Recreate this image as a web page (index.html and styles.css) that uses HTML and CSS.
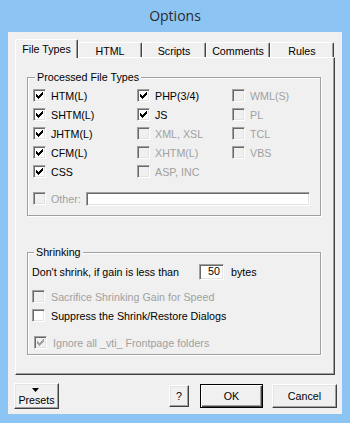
FILE: index.html
```html
<!DOCTYPE html>
<html>

<head>
    <meta charset="UTF-8">
    <title>Options</title>
    <link rel="stylesheet" href="styles.css">
</head>

<body>
    <div class="frame">
        <div class="title">Options</div>
        <div class="client">
            <div class="tabs">
                <div class="tab active">File Types</div>
                <div class="tab">HTML</div>
                <div class="tab">Scripts</div>
                <div class="tab">Comments</div>
                <div class="tab">Rules</div>
            </div>
            <div class="panel">
                <fieldset class="group types">
                    <legend>Processed File Types</legend>
                    <div class="grid">
                        <label class="item"><span class="cb"><svg viewBox="1 1 11 11"><path d="M3 5h1v1h1v1h1v-1h1v-1h1v-1h1v-1h1v3h-1v1h-1v1h-1v1h-1v1h-1v-1h-1v-1h-1z"/></svg></span>HTM(L)</label>
                        <label class="item"><span class="cb"><svg viewBox="1 1 11 11"><path d="M3 5h1v1h1v1h1v-1h1v-1h1v-1h1v-1h1v3h-1v1h-1v1h-1v1h-1v1h-1v-1h-1v-1h-1z"/></svg></span>PHP(3/4)</label>
                        <label class="item off"><span class="cb"></span>WML(S)</label>

                        <label class="item"><span class="cb"><svg viewBox="1 1 11 11"><path d="M3 5h1v1h1v1h1v-1h1v-1h1v-1h1v-1h1v3h-1v1h-1v1h-1v1h-1v1h-1v-1h-1v-1h-1z"/></svg></span>SHTM(L)</label>
                        <label class="item"><span class="cb"><svg viewBox="1 1 11 11"><path d="M3 5h1v1h1v1h1v-1h1v-1h1v-1h1v-1h1v3h-1v1h-1v1h-1v1h-1v1h-1v-1h-1v-1h-1z"/></svg></span>JS</label>
                        <label class="item off"><span class="cb"></span>PL</label>

                        <label class="item"><span class="cb"><svg viewBox="1 1 11 11"><path d="M3 5h1v1h1v1h1v-1h1v-1h1v-1h1v-1h1v3h-1v1h-1v1h-1v1h-1v1h-1v-1h-1v-1h-1z"/></svg></span>JHTM(L)</label>
                        <label class="item off"><span class="cb"></span>XML, XSL</label>
                        <label class="item off"><span class="cb"></span>TCL</label>

                        <label class="item"><span class="cb"><svg viewBox="1 1 11 11"><path d="M3 5h1v1h1v1h1v-1h1v-1h1v-1h1v-1h1v3h-1v1h-1v1h-1v1h-1v1h-1v-1h-1v-1h-1z"/></svg></span>CFM(L)</label>
                        <label class="item off"><span class="cb"></span>XHTM(L)</label>
                        <label class="item off"><span class="cb"></span>VBS</label>

                        <label class="item"><span class="cb"><svg viewBox="1 1 11 11"><path d="M3 5h1v1h1v1h1v-1h1v-1h1v-1h1v-1h1v3h-1v1h-1v1h-1v1h-1v1h-1v-1h-1v-1h-1z"/></svg></span>CSS</label>
                        <label class="item off"><span class="cb"></span>ASP, INC</label>
                    </div>
                    <div class="item off other">
                        <span class="cb"></span>Other:
                        <span class="field wide"></span>
                    </div>
                </fieldset>

                <fieldset class="group shrink">
                    <legend>Shrinking</legend>
                    <div class="gain">
                        <span class="gain-text">Don't shrink, if gain is less than</span>
                        <span class="field num">50</span>
                        <span class="unit">bytes</span>
                    </div>
                    <label class="item off sacrifice"><span class="cb"></span>Sacrifice Shrinking Gain for Speed</label>
                    <label class="item"><span class="cb"></span>Suppress the Shrink/Restore Dialogs</label>
                    <label class="item off ignore"><span class="cb"><svg viewBox="1 1 11 11"><path d="M3 5h1v1h1v1h1v-1h1v-1h1v-1h1v-1h1v3h-1v1h-1v1h-1v1h-1v1h-1v-1h-1v-1h-1z"/></svg></span>Ignore all _vti_ Frontpage folders</label>
                </fieldset>
            </div>

            <div class="buttons">
                <div class="btn presets">
                    <svg class="arrow" viewBox="0 0 7 4"><path d="M0 0h7l-3.5 4z"/></svg>
                    <span>Presets</span>
                </div>
                <div class="btn help">?</div>
                <div class="btn ok">OK</div>
                <div class="btn cancel">Cancel</div>
            </div>
        </div>
    </div>
</body>

</html>
```

FILE: styles.css
```css
body {
    margin: 0;
    background-color: #8cc4f4;
    font-family: "Liberation Sans", Arial, sans-serif;
    font-size: 10.7px;
    color: #000;
}

.frame {
    width: 350px;
    height: 423px;
}

.title {
    height: 32px;
    display: flex;
    align-items: center;
    justify-content: center;
    padding-bottom: 1px;
    box-sizing: border-box;
    font-family: "Open Sans", sans-serif;
    font-size: 14px;
    color: #2b2b2b;
}

.client {
    width: 334px;
    height: 382px;
    margin-left: 8px;
    padding: 7px 0 0 7px;
    box-sizing: border-box;
    background-color: #f0f0f0;
}

/* tabs */

.tabs {
    display: flex;
    align-items: flex-end;
    height: 18px;
}

.tab {
    width: 64px;
    height: 15px;
    box-sizing: border-box;
    padding-top: 2px;
    line-height: 12px;
    text-align: center;
    border-top: 1px solid #fff;
    border-left: 1px solid #fff;
    border-right: 1px solid #404040;
    box-shadow: inset -1px 0 #a0a0a0;
    border-radius: 2px 2px 0 0;
}

.tab.active {
    width: 63px;
    height: 19px;
    margin-bottom: -1px;
    padding-top: 3px;
    position: relative;
    z-index: 1;
    background-color: #f0f0f0;
}

.panel {
    width: 320px;
    height: 318px;
    box-sizing: border-box;
    padding: 13px 0 0 11px;
    border-top: 1px solid #fff;
    border-left: 1px solid #fff;
    border-right: 1px solid #404040;
    border-bottom: 1px solid #404040;
    box-shadow: inset -1px -1px #a0a0a0;
}

/* group boxes */

.group {
    width: 294px;
    min-width: 0;
    margin: 0;
    box-sizing: border-box;
    border: 1px solid #a0a0a0;
    box-shadow: inset 1px 1px #fff, 1px 1px #fff;
}

.group legend {
    padding: 0 2px;
    margin-left: 2px;
    line-height: 13px;
    background-color: #f0f0f0;
}

.types {
    padding: 2px 0 7px 5px;
}

.shrink {
    margin-top: 30px;
    padding: 5px 0 2px 4px;
}

.grid {
    display: grid;
    grid-template-columns: 104px 95px 1fr;
    grid-auto-rows: 19px;
}

.item {
    display: flex;
    align-items: center;
    gap: 5px;
    height: 19px;
}

.item.off {
    color: #a0a0a0;
}

.other {
    margin-top: 8px;
}

.sacrifice {
    margin-top: 7px;
}

.shrink .item {
    gap: 6px;
}

.ignore {
    margin-top: 8px;
    margin-left: 2px;
}

/* checkbox */

.cb {
    flex: none;
    width: 13px;
    height: 13px;
    box-sizing: border-box;
    border: 1px solid;
    border-color: #a0a0a0 #fff #fff #a0a0a0;
    box-shadow: inset 1px 1px #696969, inset -1px -1px #e3e3e3;
    background-color: #fff;
}

.cb svg {
    display: block;
    width: 11px;
    height: 11px;
    shape-rendering: crispEdges;
}

.off .cb {
    background-color: #f0f0f0;
}

.off .cb path {
    fill: #a0a0a0;
}

/* edit boxes */

.field {
    display: block;
    box-sizing: border-box;
    border: 1px solid;
    border-color: #a0a0a0 #fff #fff #a0a0a0;
    box-shadow: inset 1px 1px #696969, inset -1px -1px #e3e3e3;
    background-color: #fff;
    color: #000;
}

.field.wide {
    width: 224px;
    height: 14px;
    margin-left: auto;
    margin-right: 10px;
}

.gain {
    display: flex;
    align-items: center;
    height: 16px;
}

.gain-text {
    width: 167px;
}

.field.num {
    width: 25px;
    height: 16px;
    line-height: 13px;
    padding-right: 3px;
    text-align: right;
}

.unit {
    margin-left: 7px;
}

/* buttons */

.buttons {
    display: flex;
    align-items: center;
    height: 26px;
    margin: 8px 5px 0 -1px;
}

.btn {
    display: flex;
    align-items: center;
    justify-content: center;
    box-sizing: border-box;
    border: 1px solid;
    border-color: #fff #404040 #404040 #fff;
    box-shadow: inset -1px -1px #a0a0a0, inset 1px 1px #e3e3e3;
    background-color: #f0f0f0;
}

.presets {
    width: 45px;
    height: 26px;
    flex-direction: column;
    gap: 2px;
    padding-top: 1px;
}

.arrow {
    display: block;
    width: 7px;
    height: 4px;
    margin-right: 3px;
}

.help {
    width: 20px;
    height: 22px;
    margin-left: auto;
}

.ok {
    width: 63px;
    height: 24px;
    margin-left: 11px;
    border-color: #000;
    box-shadow: inset 1px 1px #fff, inset -1px -1px #404040, inset -2px -2px #a0a0a0;
}

.cancel {
    width: 65px;
    height: 24px;
    margin-left: 9px;
}
```
